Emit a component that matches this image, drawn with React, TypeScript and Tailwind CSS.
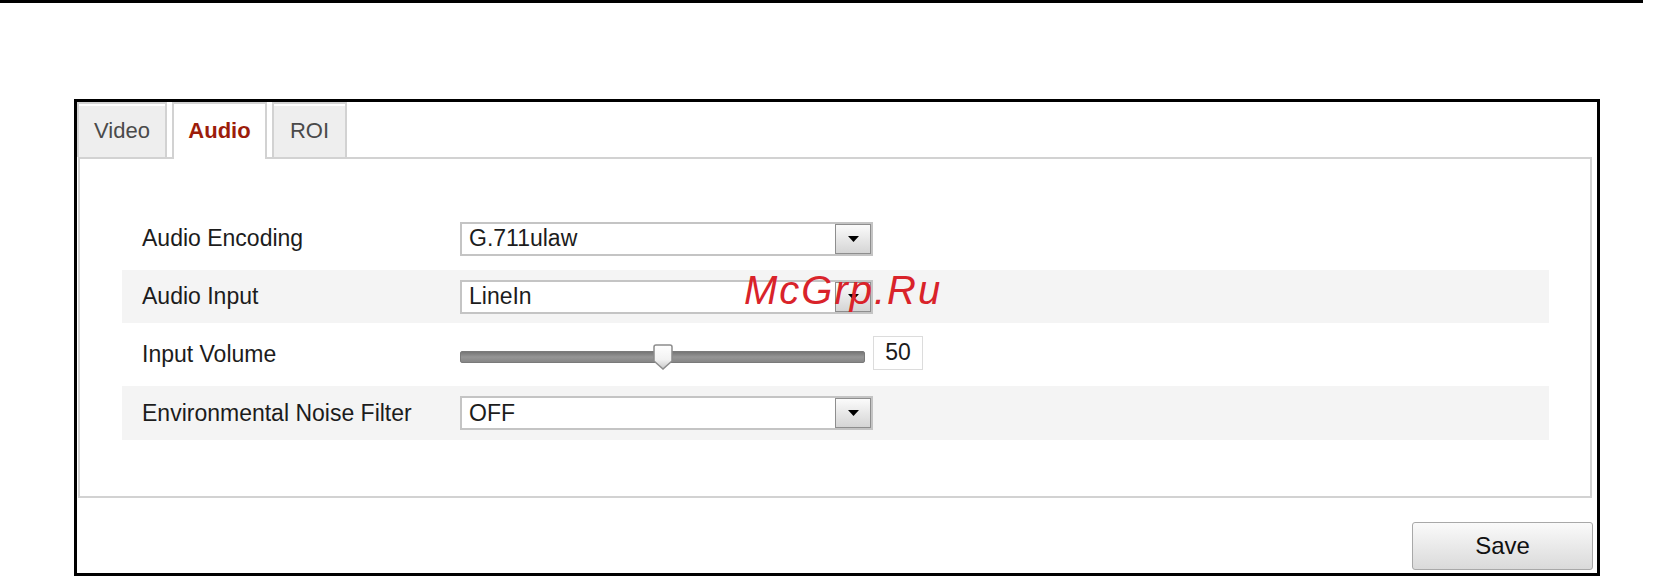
import React from 'react'

const rows = [
  { label: 'Audio Encoding', kind: 'select', value: 'G.711ulaw', h: 'h-[58px] pb-[5px]', bg: '' },
  { label: 'Audio Input', kind: 'select', value: 'LineIn', h: 'h-[53px]', bg: 'bg-[#f4f4f4]' },
  { label: 'Input Volume', kind: 'slider', value: '50', h: 'h-[63px]', bg: '' },
  { label: 'Environmental Noise Filter', kind: 'select', value: 'OFF', h: 'h-[54px]', bg: 'bg-[#f4f4f4]' },
]

function Select({ value }: { value: string }) {
  return (
    <div className="w-[413px] h-[34px] flex border-2 border-[#c4c4c4] bg-white">
      <div className="flex-1 flex items-center pl-[7px] text-[23px] text-[#1c1c1c] leading-none">{value}</div>
      <div className="w-[36px] h-full flex items-center justify-center border border-[#8e8e8e] bg-gradient-to-b from-[#fbfbfb] to-[#d5d5d5]">
        <svg width="11" height="6" viewBox="0 0 11 6">
          <path d="M0 0 H11 L5.5 6 Z" fill="#000" />
        </svg>
      </div>
    </div>
  )
}

function Slider({ value }: { value: string }) {
  return (
    <div className="flex items-center gap-[8px]">
      <div className="relative w-[405px] h-[12px] mt-[4px] rounded-[2px] bg-gradient-to-b from-[#767676] via-[#969696] to-[#868686] border border-[#7a7a7a]">
        <svg className="absolute left-[192px] -top-[8px]" width="20" height="26" viewBox="0 0 20 26">
          <defs>
            <linearGradient id="thumb" x1="0" y1="0" x2="0" y2="1">
              <stop offset="0" stopColor="#ffffff" />
              <stop offset="0.6" stopColor="#f2f2f2" />
              <stop offset="1" stopColor="#c8c8c8" />
            </linearGradient>
          </defs>
          <path d="M3 1 H17 Q19 1 19 3 V17 L10 25 L1 17 V3 Q1 1 3 1 Z" fill="url(#thumb)" stroke="#8c8c8c" strokeWidth="1.5" />
        </svg>
      </div>
      <div className="w-[50px] h-[34px] -mt-[4px] flex items-center justify-center border border-[#dcdcdc] bg-white text-[23px] text-[#1c1c1c]">
        {value}
      </div>
    </div>
  )
}

export default function App() {
  return (
    <div className="relative w-[1673px] h-[576px] bg-white overflow-hidden font-['Liberation_Sans',Arial,sans-serif]">
      <div className="h-[3px] w-[1643px] bg-black" />

      <div className="mt-[96px] ml-[74px] w-[1526px] h-[477px] border-[3px] border-black flex flex-col">
        <div className="relative z-10 flex items-end gap-[5px] h-[55px]">
          <div className="h-[55px] w-[90px] flex items-center justify-center border-2 border-b-0 border-[#d2d2d2] bg-[#eeeeee] shadow-[inset_0_2px_0_#ffffff] text-[22px] text-[#4a4a4a]">
            Video
          </div>
          <div className="h-[57px] -mb-[2px] w-[95px] flex items-center justify-center border-2 border-b-0 border-[#d2d2d2] bg-white pb-[2px] text-[22px] font-bold text-[#9c1c0a]">
            Audio
          </div>
          <div className="h-[55px] w-[75px] flex items-center justify-center border-2 border-b-0 border-[#d2d2d2] bg-[#eeeeee] shadow-[inset_0_2px_0_#ffffff] text-[22px] text-[#4a4a4a]">
            ROI
          </div>
        </div>

        <div className="ml-px w-[1514px] border-2 border-[#d2d2d2] pt-[53px] pb-[56px] pl-[42px] pr-[41px]">
          {rows.map((r) => (
            <div key={r.label} className={`flex items-center pl-[20px] ${r.h} ${r.bg}`}>
              <div className="w-[318px] text-[23px] text-[#1c1c1c]">{r.label}</div>
              {r.kind === 'select' ? <Select value={r.value} /> : <Slider value={r.value} />}
            </div>
          ))}
        </div>

        <div className="flex justify-end mt-[24px] pr-[4px]">
          <button className="w-[181px] h-[48px] rounded-[3px] border border-[#a8a8a8] bg-gradient-to-b from-[#fafafa] to-[#dadada] text-[24px] text-[#111]">
            Save
          </button>
        </div>
      </div>

      <div className="absolute left-[744px] top-[270px] text-[40px] italic tracking-[2px] text-[#d9232a] leading-none">
        McGrp.Ru
      </div>
    </div>
  )
}
